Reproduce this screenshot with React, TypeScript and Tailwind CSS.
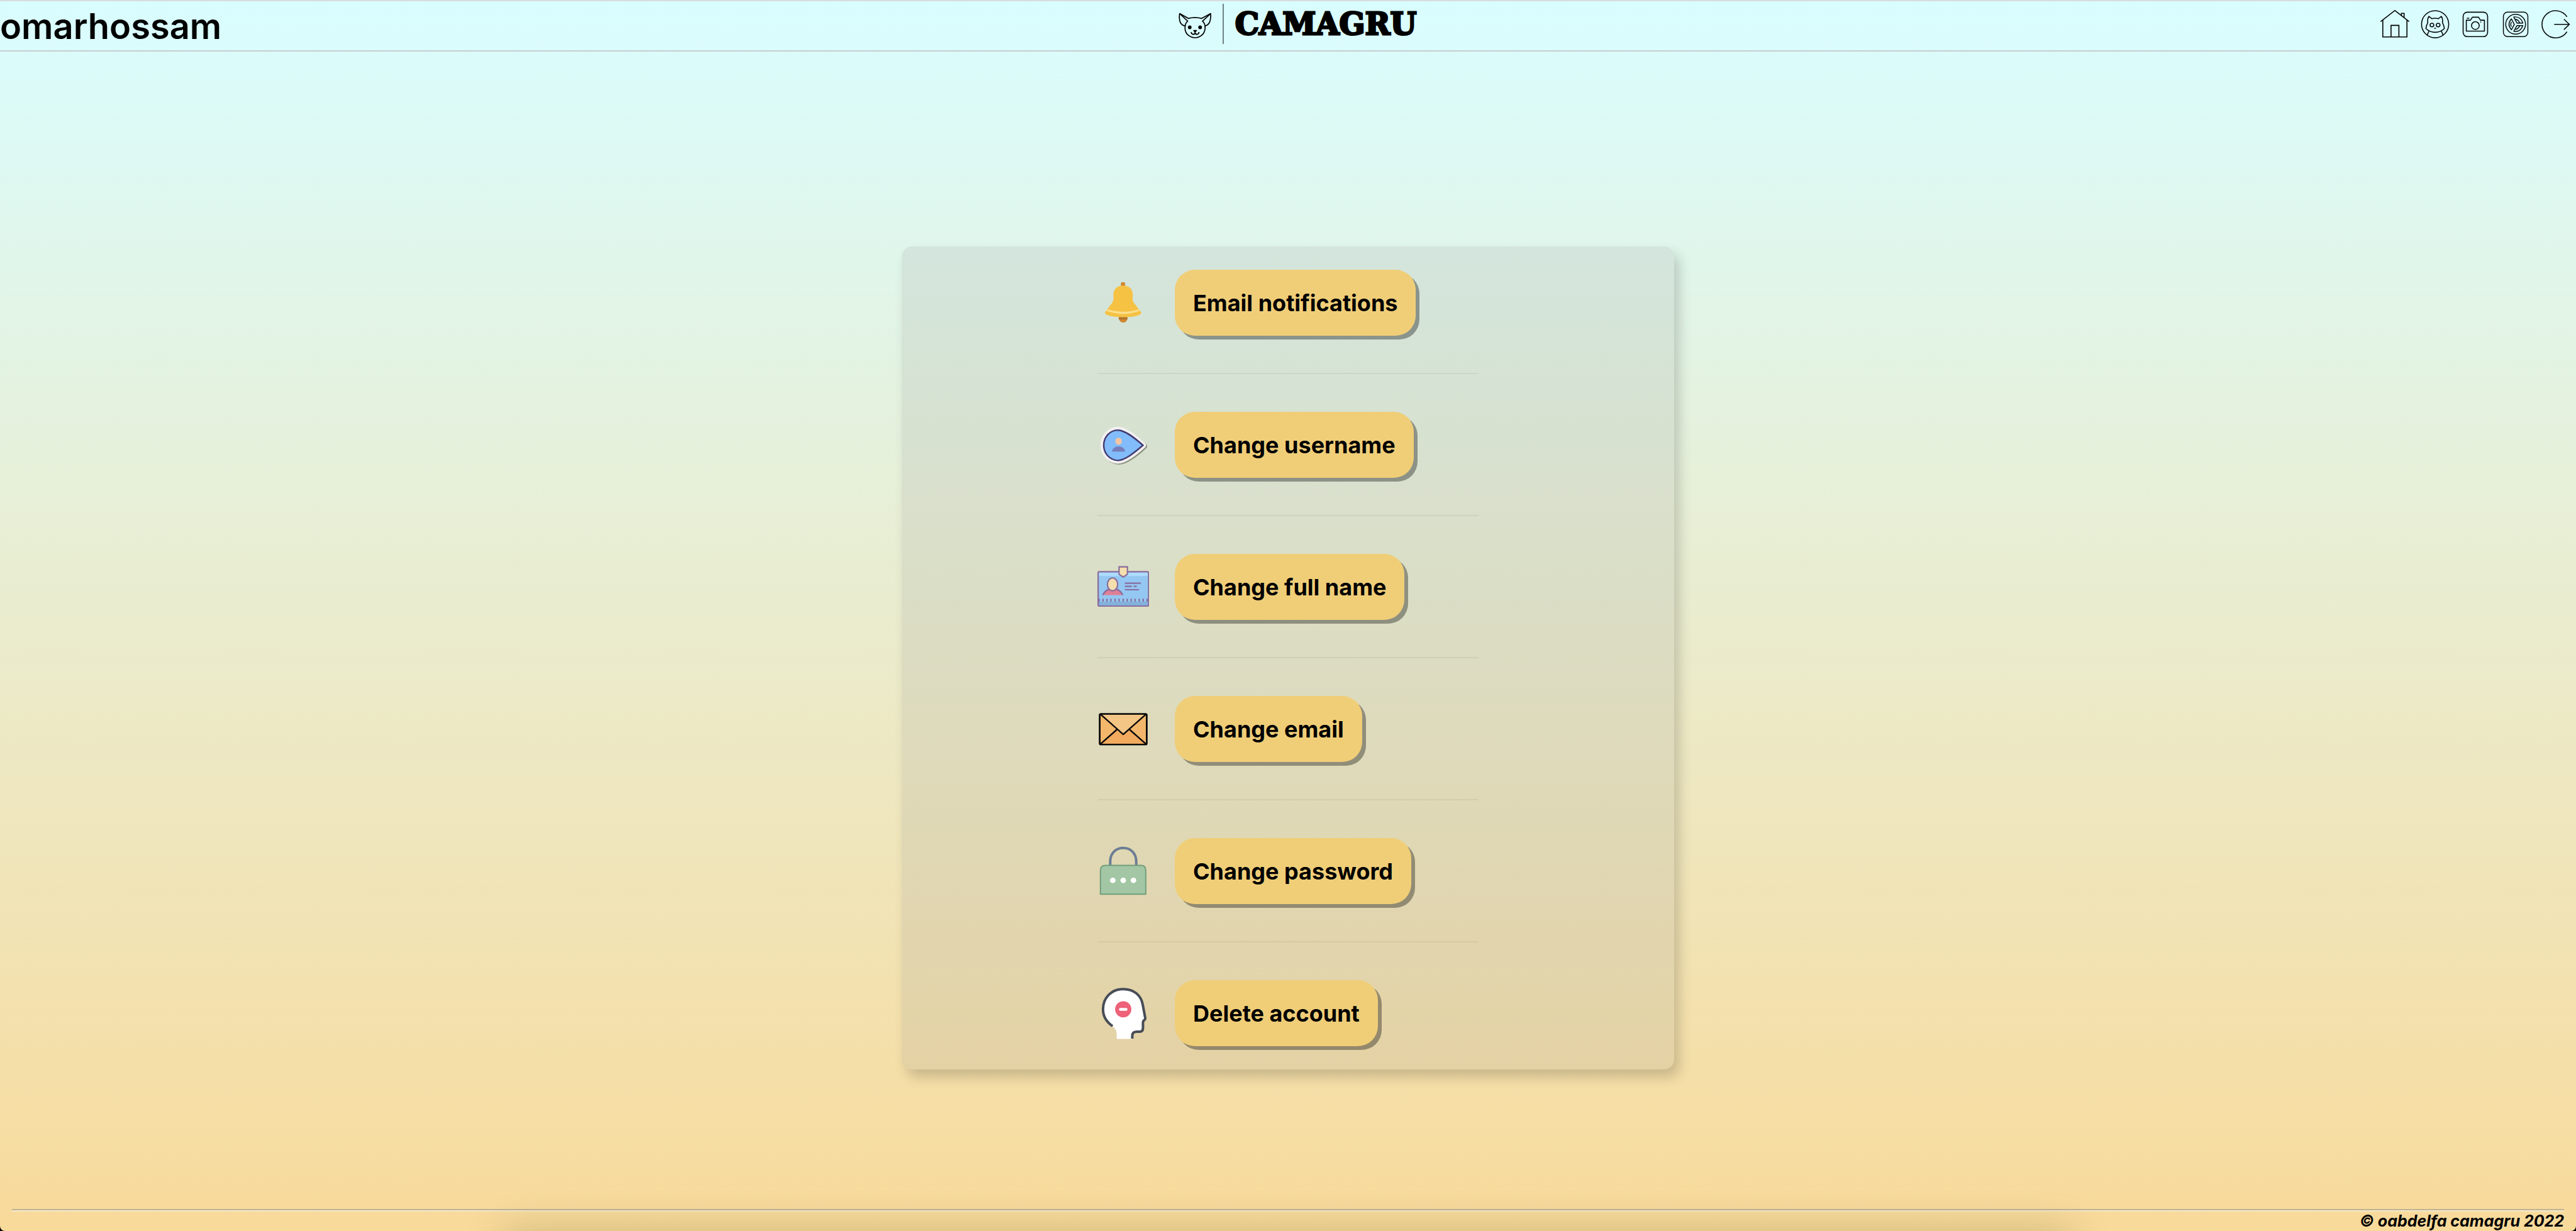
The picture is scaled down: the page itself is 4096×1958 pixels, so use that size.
import React from "react";

const ink = "#050a0b";

function HomeIcon() {
  return (
    <svg viewBox="60 18 240 240" className="size-16" fill="none" stroke="#000" strokeWidth="6" aria-hidden="true">
      <path d="M95 124 180 58 265 124" />
      <path d="M108 114V216H252V114" />
      <path d="M157 216V147H204V216" />
      <path d="M219 90V75H235V100" />
    </svg>
  );
}

function CatIcon() {
  return (
    <svg viewBox="300 18 240 240" className="size-16" fill="none" stroke={ink} strokeWidth="6" strokeLinejoin="round" aria-hidden="true">
      <circle cx="420" cy="140" r="81" />
      <path d="M383 93C376 103 374 116 376 131C370 143 366 155 365 166C382 182 399 188 420 188S459 182 475 166C474 155 470 143 464 131C466 116 464 103 457 93L440 107Q420 102 400 107Z" />
      <circle cx="401" cy="145" r="11" />
      <circle cx="438" cy="145" r="11" />
      <path d="M414 163H426L420 168Z" fill={ink} strokeWidth="2" />
      <path d="M384 180Q378 191 373 205M456 180Q462 191 467 205" />
    </svg>
  );
}

function CameraIcon() {
  return (
    <svg viewBox="540 18 240 240" className="size-16" fill="none" stroke={ink} strokeWidth="6" strokeLinejoin="round" aria-hidden="true">
      <rect x="587" y="68" width="146" height="146" rx="25" />
      <path d="M606 116H631L642 98H679L690 116H714V181H606Z" />
      <circle cx="660" cy="148" r="23" />
      <path d="M609 104H624M689 127H695" />
    </svg>
  );
}

function SettingsIcon() {
  return (
    <svg viewBox="780 18 240 240" className="size-16" fill="none" stroke={ink} strokeWidth="5.5" strokeLinejoin="round" aria-hidden="true">
      <rect x="827" y="68" width="146" height="146" rx="25" />
      <circle cx="900" cy="140" r="59" />
      <path d="M889 97Q928 91 943 133H908Z" />
      <path d="M943 148Q928 190 889 182L908 148Z" />
      <path d="M875 108Q846 140 875 173L892 141Z" />
      <path d="M898 110Q917 113 924 133M924 148Q917 168 898 171M874 126Q868 140 874 155" />
    </svg>
  );
}

function LogoutIcon() {
  return (
    <svg viewBox="1020 18 240 240" className="size-16" fill="none" stroke={ink} strokeWidth="6" aria-hidden="true">
      <path d="M1206 96A81 81 0 1 0 1206 185" />
      <path d="M1130 141H1220M1188 110 1220 141 1188 172" />
    </svg>
  );
}

function DogLogo() {
  return (
    <svg viewBox="60 60 210 180" className="h-12 w-14" fill="none" stroke="#000" strokeWidth="6.5" strokeLinejoin="round" aria-hidden="true">
      <path d="M126 110Q165 99 205 110L259 81Q261 112 252 134Q244 151 225 155Q229 182 213 203Q193 225 166 225T118 203Q102 182 107 155Q87 151 78 134Q69 112 74 81Z" />
      <path d="M74 81 122 126Q108 138 107 155M259 81 210 126Q224 138 225 155" />
      <circle cx="134" cy="163" r="11" fill="#000" stroke="none" />
      <circle cx="196" cy="163" r="11" fill="#000" stroke="none" />
      <path d="M158 182H174L166 190Z" fill="#000" />
      <path d="M166 186V196Q164 205 155 205Q143 203 143 191M166 196Q168 205 177 205Q189 203 189 191" />
    </svg>
  );
}

const glyph = "size-[82px] shrink-0";
const flat = { vectorEffect: "non-scaling-stroke" } as const;

function BellGlyph() {
  return (
    <svg viewBox="68 97 222 306" preserveAspectRatio="none" className={glyph} aria-hidden="true">
      <rect x="169" y="126" width="18" height="40" rx="9" fill="#cf8730" />
      <path d="M160 325H197V340Q195 366 179 366T160 340Z" fill="#cf8730" />
      <path d="M160 325H197V348H160Z" fill="#b1742d" />
      <path d="M137 200C137 165 155 146 179 146S220 165 220 200C220 225 218 235 224 247L256 304C262 322 225 334 179 334S95 322 101 304L132 247C138 235 137 225 137 200Z" fill="#f6c244" />
      <path d="M110 287Q179 316 247 287L252 296Q179 334 105 296Z" fill="#fbdf8e" />
    </svg>
  );
}

function UserPinGlyph() {
  const outer = "M157 147C190 149 232 190 273 244Q281 256 274 268C232 322 190 364 157 366C118 366 81 320 81 256S118 147 157 147Z";
  return (
    <svg viewBox="68 103 222 306" preserveAspectRatio="none" className={glyph} aria-hidden="true">
      <path d={outer} fill="#8c927f" transform="translate(5 6)" />
      <path d={outer} fill="#f2f1f1" />
      <path d="M155 167C185 168 220 203 264 257C220 309 185 346 155 347C123 345 95 308 95 257S123 168 155 167Z" fill="#82bcfa" stroke="#433a70" strokeWidth="2.4" {...flat} />
      <ellipse cx="159" cy="233" rx="14" ry="21" fill="#f3c5a3" />
      <path d="M131 294C132 274 145 263 159 263S186 274 187 294Z" fill="#757eba" />
    </svg>
  );
}

function IdCardGlyph() {
  return (
    <svg viewBox="68 111 222 306" preserveAspectRatio="none" className={glyph} stroke="#886c9d" strokeWidth="2.2" aria-hidden="true">
      <rect x="71" y="172" width="217" height="204" rx="5" ry="7" fill="#94c7f1" stroke="none" />
      <path d="M73 176H286V198H73Z" fill="#addcff" stroke="none" />
      <path d="M73 350H286V375H73Z" fill="#82b1dc" stroke="none" />
      <rect x="71" y="172" width="217" height="204" rx="5" ry="7" fill="none" {...flat} />
      <path d="M92 332V350M109 332V350M126 332V350M144 332V350M161 332V350M179 332V350M196 332V350M213 332V350M230 332V350M248 332V350M265 332V350M282 332V350M75 332V350" {...flat} />
      <path d="M90 311Q104 277 134 275T178 311Z" fill="#e07f96" stroke="none" />
      <path d="M91 310Q103 279 122 275M146 275Q165 279 177 310" fill="none" {...flat} />
      <ellipse cx="133" cy="247" rx="22" ry="38" fill="#f6dfae" {...flat} />
      <path d="M161 143H197V187L179 204 161 187Z" fill="#f6dfae" {...flat} />
      <path d="M186 240H255M186 259H216M224 259H237M186 279H247" {...flat} />
    </svg>
  );
}

function EnvelopeGlyph() {
  return (
    <svg viewBox="68 87 222 306" preserveAspectRatio="none" className={glyph} stroke="#080808" strokeWidth="2.4" strokeLinejoin="round" aria-hidden="true">
      <rect x="78" y="149" width="202" height="181" rx="4" ry="5" fill="#f2b76b" {...flat} />
      <path d="M82 326 153 240 179 270 205 240 276 326Z" fill="#f1aa5e" stroke="none" />
      <path d="M82 152H276L179 270Z" fill="#f4c685" stroke="none" />
      <path d="M82 152 179 270 276 152M82 326 153 240M205 240 276 326" fill="none" {...flat} />
      <rect x="78" y="149" width="202" height="181" rx="4" ry="5" fill="none" {...flat} />
    </svg>
  );
}

function PadlockGlyph() {
  return (
    <svg viewBox="68 93 222 306" preserveAspectRatio="none" className={glyph} aria-hidden="true">
      <path d="M123 210V188C123 140 145 107 179 107S235 140 235 188V210" fill="none" stroke="#6c7d94" strokeWidth="4" {...flat} />
      <path d="M81 381V240Q81 211 102 211H256Q276 211 276 240V381Z" fill="#a3c7a4" stroke="#719e7c" strokeWidth="2" {...flat} />
      <ellipse cx="134" cy="299" rx="12" ry="16" fill="#fff" />
      <ellipse cx="179" cy="299" rx="12" ry="16" fill="#fff" />
      <ellipse cx="223" cy="299" rx="12" ry="16" fill="#fff" />
    </svg>
  );
}

function HeadGlyph() {
  return (
    <svg viewBox="68 100 222 306" preserveAspectRatio="none" className={glyph} aria-hidden="true">
      <path d="M133 328C105 302 92 270 92 228C92 158 130 108 179 108C224 108 255 143 263 200L273 274Q276 285 270 292Q264 296 264 308V340Q264 361 250 361H236Q218 362 218 385V404H151V372Q149 345 133 328Z" fill="#fff" />
      <path d="M133 328C105 302 92 270 92 228C92 158 130 108 179 108C224 108 255 143 263 200L273 274Q276 285 270 292Q264 296 264 308V340Q264 361 250 361H236Q218 362 218 385V402" fill="none" stroke="#474d57" strokeWidth="4" {...flat} />
      <ellipse cx="179" cy="228" rx="35" ry="48" fill="#ed6179" />
      <rect x="161" y="220" width="36" height="17" rx="6" fill="#fff" />
    </svg>
  );
}

const actions = [
  { label: "Email notifications", Glyph: BellGlyph },
  { label: "Change username", Glyph: UserPinGlyph },
  { label: "Change full name", Glyph: IdCardGlyph },
  { label: "Change email", Glyph: EnvelopeGlyph },
  { label: "Change password", Glyph: PadlockGlyph },
  { label: "Delete account", Glyph: HeadGlyph },
];

const links = [
  { label: "Home", Icon: HomeIcon },
  { label: "Profile", Icon: CatIcon },
  { label: "Camera", Icon: CameraIcon },
  { label: "Settings", Icon: SettingsIcon },
  { label: "Log out", Icon: LogoutIcon },
];

export default function App() {
  return (
    <div className="bg-black font-[Inter,sans-serif] text-black">
      <div className="relative flex min-h-screen flex-col overflow-hidden rounded-b-lg bg-linear-to-b from-[#d9fdff] to-[#f8da9a]">
        <header className="grid h-[82px] grid-cols-[1fr_auto_1fr] items-start border-t-2 border-b-2 border-t-[#dadcdd] border-b-[#c9cccd]">
          <span className="pt-2 text-[56px] leading-[64px] font-semibold">omarhossam</span>
          <a href="#" className="flex items-start pt-1 pl-7">
            <span className="mt-[10px]">
              <DogLogo />
            </span>
            <span className="ml-4 h-16 w-0.5 bg-[#6f8284]" />
            <span className="ml-[18px] font-['DejaVu_Serif',serif] text-[48px] leading-[64px] font-bold [-webkit-text-stroke:3px_black]">
              CAMAGRU
            </span>
          </a>
          <nav className="flex justify-end pt-1">
            {links.map(({ label, Icon }) => (
              <a key={label} href="#" aria-label={label}>
                <Icon />
              </a>
            ))}
          </nav>
        </header>

        <main className="flex justify-center pt-[310px] pb-16">
          <section className="flex w-[30%] justify-center rounded-2xl bg-[#969696]/17 py-[37px] shadow-[8px_12px_20px_rgba(0,0,0,0.18)]">
            <ul className="w-[606px]">
              {actions.map(({ label, Glyph }, i) => (
                <li key={label}>
                  {i > 0 && <hr className="mt-[59px] mb-[60px] border-t-2 border-black/5" />}
                  <div className="flex items-center gap-[41px]">
                    <Glyph />
                    <button
                      type="button"
                      className="h-[105px] rounded-[32px] bg-[#f0ce78] px-[29px] text-[36px] font-bold whitespace-nowrap shadow-[6px_6px_0_rgba(0,0,0,0.35)]"
                    >
                      {label}
                    </button>
                  </div>
                </li>
              ))}
            </ul>
          </section>
        </main>

        <footer className="relative mt-auto px-[19px]">
          <div className="absolute top-full left-1/2 h-16 w-[2490px] -translate-x-1/2 shadow-[0_0_64px_rgba(60,60,20,0.22)]" />
          <hr className="border-t-2 border-b-2 border-t-[#beb292] border-b-[#f5e8cc]" />
          <p className="text-right text-[25px] leading-[31px] font-bold italic">© oabdelfa camagru 2022</p>
        </footer>
      </div>
    </div>
  );
}
